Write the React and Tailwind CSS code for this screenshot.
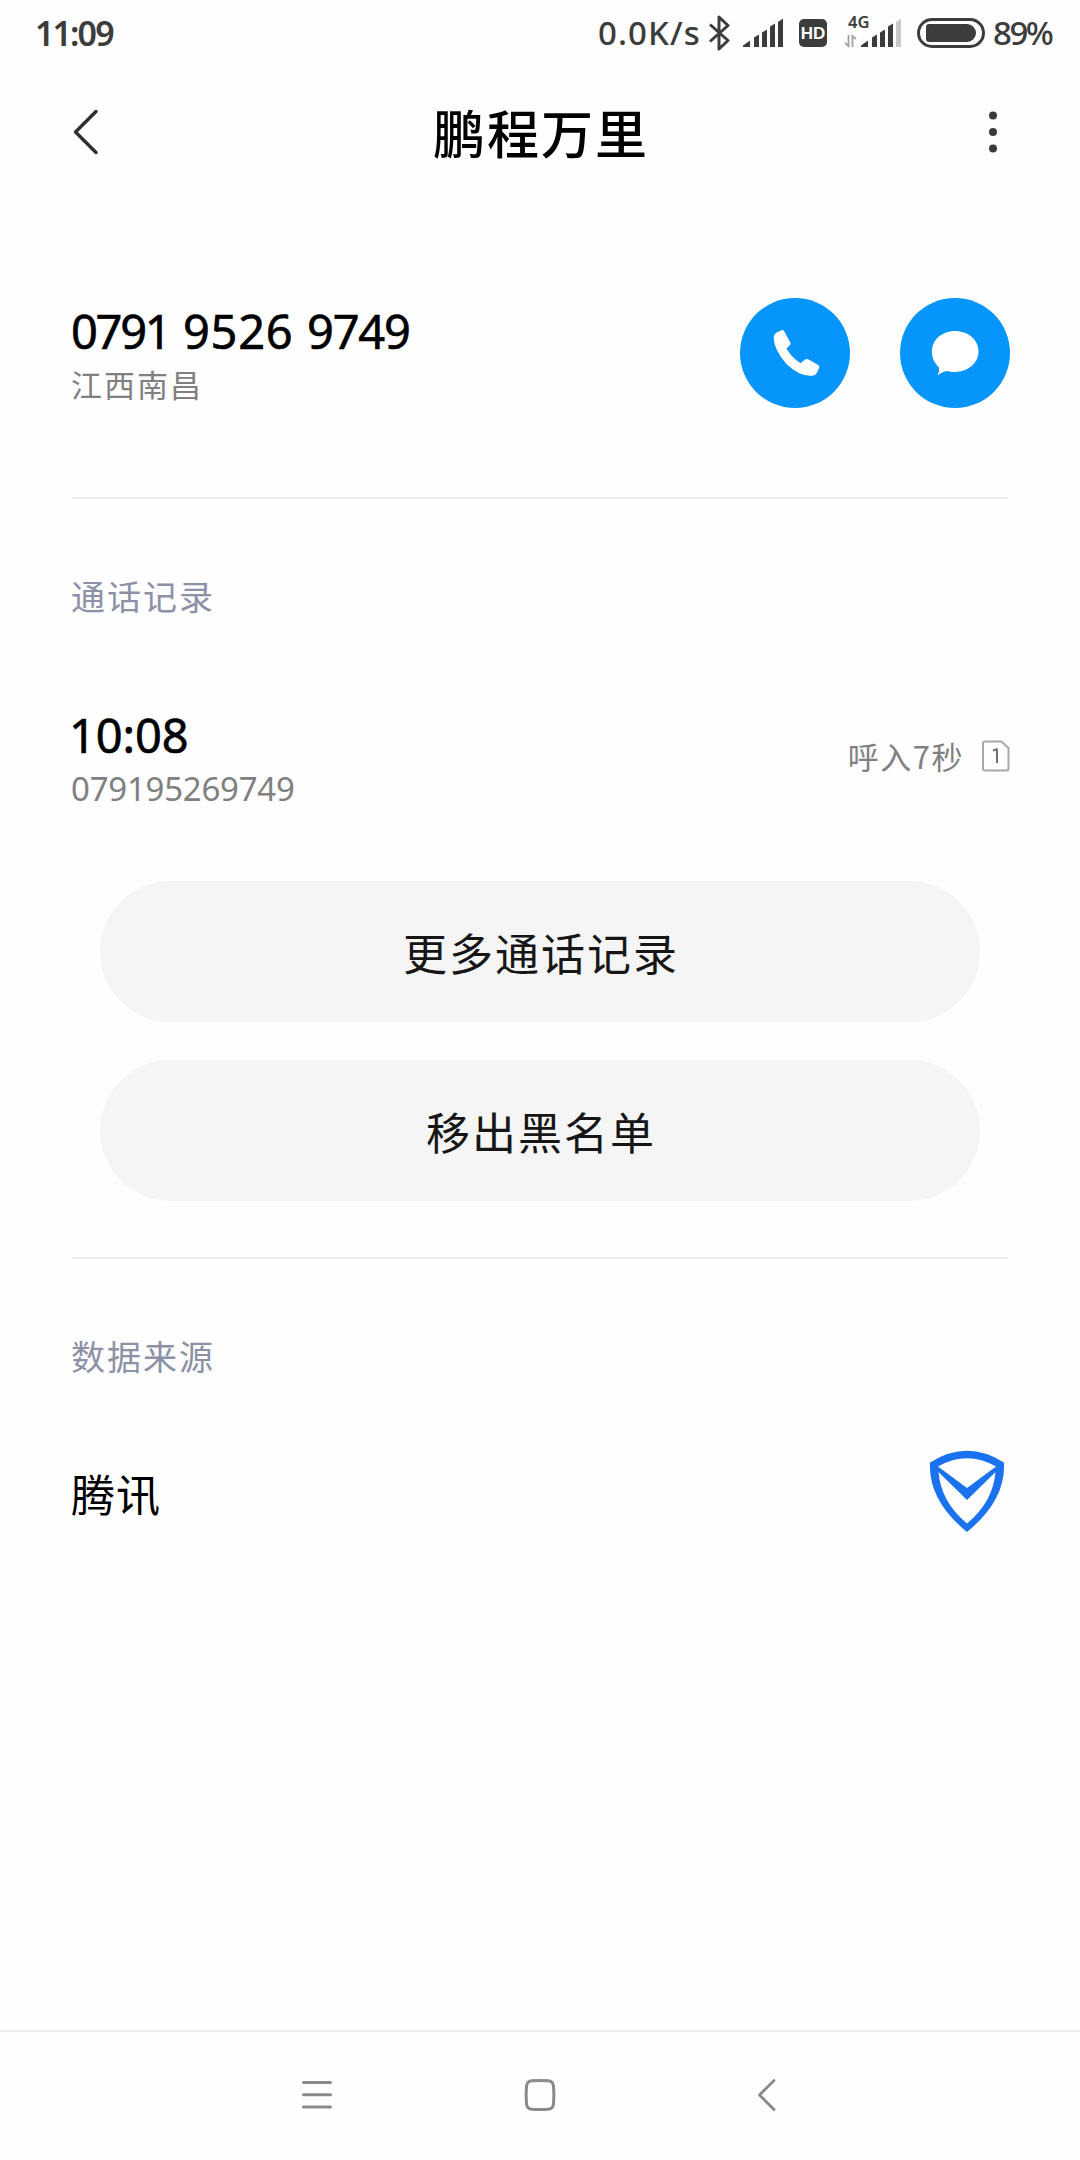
const CJK = 'font-["Noto_Sans_CJK_SC",sans-serif]';
const LATIN = 'font-["Noto_Sans","Noto_Sans_CJK_SC",sans-serif]';

function SignalBars({ last = '#3c3c3c' }) {
  return (
    <svg width="42" height="31" viewBox="0 0 42 31" fill="#3c3c3c">
      <path d="M1 30v-1.500l7-5v6.500z" />
      <path d="M12 30v-9.500l5-3v12.500z" />
      <path d="M20 30v-14.500l5-3v17.500z" />
      <path d="M28 30v-20.500l5-3v23.500z" />
      <path d="M36 30v-25l5-3.500v28.500z" fill={last} />
    </svg>
  );
}

function StatusBar() {
  return (
    <div className={`${LATIN} flex h-[66px] items-start text-[#3c3c3c]`}>
      <span className="ml-[35px] mt-[9px] w-[90px] whitespace-nowrap text-[34px] font-semibold leading-[48px] tracking-[-1.900px]">11:09</span>
      <span className="ml-[473px] mt-[9px] w-[109px] whitespace-nowrap text-[33px] font-medium leading-[48px] tracking-[1.100px]">0.0K/s</span>
      <svg className="ml-[1px] mt-[15px]" width="22" height="36" viewBox="0 0 22 36" fill="none" stroke="#3c3c3c" strokeWidth="3" strokeLinejoin="round">
        <path d="M2 9.500l18 16-9 8.500v-32l9 8.500-18 16" />
      </svg>
      <div className="ml-[12px] mt-[17px]"><SignalBars /></div>
      <div className="ml-[15px] mt-[19px] flex h-7 w-7 items-center justify-center rounded-[5px] bg-[#3c3c3c] font-['Liberation_Sans',sans-serif] text-[17px] font-bold leading-none text-white">HD</div>
      <div className="ml-[17px] mt-[12px] flex h-9 w-[16px] flex-col">
        <span className="ml-[4px] whitespace-nowrap text-[16.500px] font-semibold leading-[20px]">4G</span>
        <svg className="mt-[2px]" width="14" height="14" viewBox="0 0 14 14" fill="none" stroke="#a3a3a3" strokeWidth="1.800">
          <path d="M4.500 1v11l-3.500-3M8.500 13v-11l3.500 3" />
        </svg>
      </div>
      <div className="mt-[17px]"><SignalBars last="#c8c8c8" /></div>
      <div className="ml-[15px] mt-[18px] flex h-[30px] w-[68px] items-center justify-center rounded-full border-[3px] border-[#3c3c3c]">
        <div className="h-[18px] w-[50px] rounded-l-[3px] rounded-r-[9px] bg-[#3c3c3c]" />
      </div>
      <span className="ml-[8px] mt-[9px] whitespace-nowrap text-[33px] font-medium leading-[48px] tracking-[-2.500px]">89%</span>
    </div>
  );
}

function Header() {
  return (
    <header className="flex h-[132px] items-center justify-between pl-[72px] pr-[80px]">
      <svg width="28" height="46" viewBox="0 0 28 46" fill="none" stroke="#303030" strokeWidth="3.500" strokeLinecap="round" strokeLinejoin="round">
        <path d="M24 2.500L3.500 23 24 43.500" />
      </svg>
      <h1 className={`${CJK} -ml-[4px] text-[52px] font-medium leading-[72px] tracking-[2px] text-black`}>鹏程万里</h1>
      <svg width="14" height="46" viewBox="0 0 14 46" fill="#3a3a3a">
        <circle cx="7" cy="6.500" r="4" />
        <circle cx="7" cy="23" r="4" />
        <circle cx="7" cy="39.500" r="4" />
      </svg>
    </header>
  );
}

function RoundButton({ label, children }) {
  return (
    <button aria-label={label} className="flex h-[110px] w-[110px] items-center justify-center rounded-full bg-[#0696fb]">
      {children}
    </button>
  );
}

function ContactRow() {
  return (
    <section className="flex h-[301px] items-start justify-between border-b-2 border-[#ececec] pt-[100px]">
      <div>
        <div className={`${LATIN} -ml-[1px] flex h-[66px] whitespace-pre text-[47px] leading-[66px] text-black [-webkit-text-stroke:0.6px_black]`}>
          <span className="w-[112px] tracking-[-2.300px]">0791 </span>
          <span className="w-[124px] tracking-[0.700px]">9526 </span>
          <span className="tracking-[-1.200px]">9749</span>
        </div>
        <div className={`${CJK} -ml-px text-[31px] leading-[40px] tracking-[2px] text-[#808080]`}>江西南昌</div>
      </div>
      <div className="-mr-[2px] flex gap-[50px]">
        <RoundButton label="拨打电话">
          <svg width="110" height="110" viewBox="0 0 110 110" fill="#fff">
            <path d="M36.500 34.500L41.500 32.200q1.800-.6 2.800 1.200L50.300 44.500q.8 1.600-.5 2.800L46.500 50.500Q51 59 60.500 65.300l4.500-3.800q1.600-1 3.200-.2l10 5.600q1.700 1 1 2.900l-2.400 5.200q-1 2-3.300 2.400Q60 79.500 46 65.500 34 51.500 33.700 40q.2-4 2.800-5.500z" />
          </svg>
        </RoundButton>
        <RoundButton label="发送短信">
          <svg width="110" height="110" viewBox="0 0 110 110" fill="#fff">
            <path d="M55 33c13 0 23.500 8.700 23.500 20.300S68 74 55 74c-2.800 0-5.200-.3-7.600-1-3.500.5-6.500 1.700-10.200 4.500 1.800-2.600 2.300-5 1.700-8.300-4.300-3.700-7-9-7-15.400C31.900 41.700 42 33 55 33z" />
          </svg>
        </RoundButton>
      </div>
    </section>
  );
}

function SectionTitle({ children }) {
  return <h2 className={`${CJK} -ml-px h-[50px] text-[34px] leading-[50px] tracking-[2px] text-[#8d91a6]`}>{children}</h2>;
}

function PillButton({ children }) {
  return (
    <button className={`${CJK} mx-[28px] flex h-[141px] items-center justify-center rounded-full bg-[#f5f5f5] pl-[2px] text-[44px] tracking-[2px] text-[#161616]`}>
      {children}
    </button>
  );
}

function CallLog() {
  return (
    <section className="flex h-[760px] flex-col border-b-2 border-[#ececec] pt-[72px]">
      <SectionTitle>通话记录</SectionTitle>
      <div className="mt-[81px] flex h-[112px] items-start justify-between">
        <div className={LATIN}>
          <div className="-ml-[3px] h-[66px] whitespace-nowrap text-[47px] leading-[66px] tracking-[-0.100px] text-black [-webkit-text-stroke:0.6px_black]">10:08</div>
          <div className="-ml-px -mt-[2px] whitespace-nowrap text-[33px] leading-[46px] tracking-[-0.250px] text-[#808080]">079195269749</div>
        </div>
        <div className="-mr-[2px] mt-[32px] flex items-center">
          <span className={`${CJK} mr-[18px] text-[31px] leading-[44px] tracking-[1.500px] text-[#808080]`}>呼入7秒</span>
          <svg width="28" height="32" viewBox="0 0 28 32" fill="none" stroke="#a8a8a8" strokeWidth="2" strokeLinejoin="round">
            <path d="M3 1.500h16.500l7 6.500v20.500q0 2-2 2h-21.500q-2 0-2-2v-25q0-2 2-2z" />
            <path d="M11 10.500l4-1.200v13.700" stroke="#6e6e6e" />
          </svg>
        </div>
      </div>
      <div className="mt-[67px] flex flex-col gap-[38px]">
        <PillButton>更多通话记录</PillButton>
        <PillButton>移出黑名单</PillButton>
      </div>
    </section>
  );
}

function DataSource() {
  return (
    <section className="flex flex-1 flex-col pt-[72px]">
      <SectionTitle>数据来源</SectionTitle>
      <div className="mt-[69px] flex h-[82px] items-center justify-between">
        <span className={`${CJK} -ml-px mt-[3px] text-[44px] leading-[64px] tracking-[1px] text-black`}>腾讯</span>
        <svg className="mr-[3px]" width="76" height="82" viewBox="0 0 76 82" fill="#1b72ee" fillRule="evenodd">
          <path d="M1 12.500Q38-11 75 12.500 77 50 38 82-1 50 1 12.500zM9 16.500L38 38 67 16.500Q38 0 9 16.500zM9.500 22Q12 52 38 73.500 64 52 66.500 22L38 50z" />
        </svg>
      </div>
    </section>
  );
}

function NavBar() {
  return (
    <nav className="flex h-[130px] items-center justify-between border-t-2 border-[#ececec] pb-[3px] pl-[301px] pr-[303px]">
      <svg width="32" height="32" viewBox="0 0 32 32" stroke="#8a8a8a" strokeWidth="3" strokeLinecap="round">
        <path d="M2.500 3.500h27M2.500 15.700h27M2.500 28h27" />
      </svg>
      <svg className="-ml-[11px]" width="34" height="34" viewBox="0 0 34 34" fill="none" stroke="#8a8a8a" strokeWidth="3">
        <path d="M9 2.700q8-.6 16 0 5 .4 5.500 5.500.8 8.800 0 17.600-.5 5.100-5.500 5.500-8 .6-16 0-5-.4-5.500-5.500-.8-8.800 0-17.600Q4 3.100 9 2.700z" />
      </svg>
      <svg width="20" height="34" viewBox="0 0 20 34" fill="none" stroke="#8a8a8a" strokeWidth="2.800" strokeLinecap="round" strokeLinejoin="round">
        <path d="M17 2.500L2.500 17 17 31.500" />
      </svg>
    </nav>
  );
}

export default function App() {
  return (
    <div className="flex h-[2160px] w-[1080px] flex-col overflow-hidden bg-[#fefefe]">
      <StatusBar />
      <Header />
      <main className="flex flex-1 flex-col px-[72px]">
        <ContactRow />
        <CallLog />
        <DataSource />
      </main>
      <NavBar />
    </div>
  );
}
